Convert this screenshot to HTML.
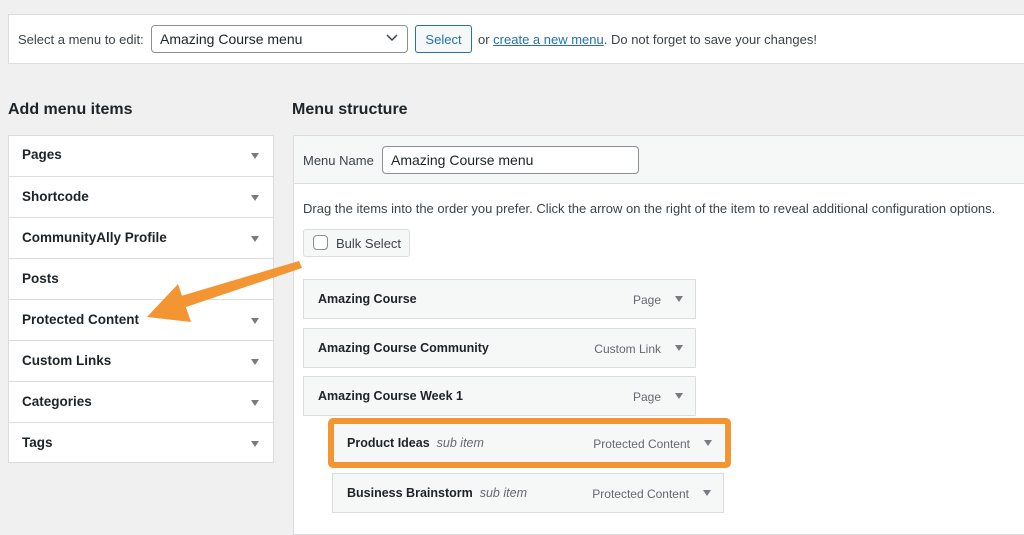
<!DOCTYPE html><html><head><style>
body{margin:0;width:1024px;height:518px;background:#f0f0f1;font-family:"Liberation Sans",sans-serif;color:#1d2327;position:relative;overflow:hidden}
.a{position:absolute;box-sizing:border-box}
.tri{width:0;height:0;border-left:4px solid transparent;border-right:4px solid transparent;border-top:6px solid #787c82;position:absolute}
.row{position:absolute;left:9px;width:264px;height:41px;border-top:1px solid #dcdcde;font-size:13.5px;font-weight:bold;padding:12px 0 0 13px;box-sizing:border-box}
.row .tri{right:14px;top:18px}
.it{position:absolute;background:#f6f7f7;border:1px solid #dcdcde;box-sizing:border-box;height:40px;font-size:12.5px;font-weight:bold;padding:12px 0 0 14px}
.it .t{position:absolute;right:34px;top:13px;font-weight:normal;color:#646970;font-size:12px}
.it .tri{right:12px;top:16px}
.it i{font-weight:normal;color:#646970;margin-left:7px}
</style></head><body>
<div class="a" style="left:8px;top:14px;width:1030px;height:50px;background:#fff;border:1px solid #dcdcde"></div>
<div class="a" style="left:18px;top:32px;font-size:13px;color:#3c434a">Select a menu to edit:</div>
<div class="a" style="left:151px;top:25px;width:257px;height:28px;border:1px solid #8c8f94;border-radius:4px;background:#fff;font-size:14px;padding:5px 8px">Amazing Course menu</div>
<svg class="a" style="left:386px;top:34px" width="12" height="8"><path d="M1 1l5 5 5-5" fill="none" stroke="#3c434a" stroke-width="1.5"/></svg>
<div class="a" style="left:415px;top:25px;width:57px;height:28px;border:1px solid #2271b1;border-radius:3px;background:#f6f7f7;color:#2271b1;font-size:13px;text-align:center;padding-top:6px">Select</div>
<div class="a" style="left:478px;top:32px;font-size:13px;color:#3c434a">or <span style="color:#2271b1;text-decoration:underline">create a new menu</span>. Do not forget to save your changes!</div>
<div class="a" style="left:8px;top:101px;font-size:16px;font-weight:bold">Add menu items</div>
<div class="a" style="left:292px;top:101px;font-size:16px;font-weight:bold">Menu structure</div>
<div class="a" style="left:8px;top:135px;width:266px;height:328px;background:#fff;border:1px solid #dcdcde"></div>
<div class="row" style="top:135px;border-top:none">Pages<div class="tri"></div></div>
<div class="row" style="top:176px">Shortcode<div class="tri"></div></div>
<div class="row" style="top:217px">CommunityAlly Profile<div class="tri"></div></div>
<div class="row" style="top:258px">Posts</div>
<div class="row" style="top:299px">Protected Content<div class="tri"></div></div>
<div class="row" style="top:340px">Custom Links<div class="tri"></div></div>
<div class="row" style="top:381px">Categories<div class="tri"></div></div>
<div class="row" style="top:422px">Tags<div class="tri"></div></div>
<div class="a" style="left:293px;top:135px;width:740px;height:400px;background:#fff;border:1px solid #dcdcde"></div>
<div class="a" style="left:294px;top:136px;width:740px;height:48px;background:#f6f7f7;border-bottom:1px solid #dcdcde"></div>
<div class="a" style="left:303px;top:153px;font-size:13px;color:#3c434a">Menu Name</div>
<div class="a" style="left:382px;top:146px;width:257px;height:28px;border:1px solid #8c8f94;border-radius:4px;background:#fff;font-size:14px;padding:5px 8px">Amazing Course menu</div>
<div class="a" style="left:303px;top:201px;font-size:13px;color:#3c434a">Drag the items into the order you prefer. Click the arrow on the right of the item to reveal additional configuration options.</div>
<div class="a" style="left:303px;top:229px;width:107px;height:28px;border:1px solid #dcdcde;border-radius:3px;background:#f6f7f7;font-size:13px;color:#3c434a;padding:6px 0 0 32px">Bulk Select</div>
<div class="a" style="left:313px;top:235px;width:15px;height:15px;border:1px solid #8c8f94;border-radius:4px;background:#fff"></div>
<div class="it" style="left:303px;top:279px;width:393px">Amazing Course<span class="t">Page</span><div class="tri"></div></div>
<div class="it" style="left:303px;top:328px;width:393px">Amazing Course Community<span class="t">Custom Link</span><div class="tri"></div></div>
<div class="it" style="left:303px;top:376px;width:393px">Amazing Course Week 1<span class="t">Page</span><div class="tri"></div></div>
<div class="a" style="left:328px;top:418px;width:403px;height:50px;border:6px solid #f39532;border-radius:5px"></div>
<div class="it" style="left:334px;top:424px;width:390px;height:38px;border:none;padding-top:12px;padding-left:13px">Product Ideas<i>sub item</i><span class="t">Protected Content</span><div class="tri"></div></div>
<div class="it" style="left:332px;top:473px;width:392px">Business Brainstorm<i>sub item</i><span class="t">Protected Content</span><div class="tri"></div></div>
<svg class="a" style="left:0;top:0" width="1024" height="518"><polygon points="299,261 302,268 186,307 181,296" fill="#f39532"/><polygon points="147,317 178,284 191,322" fill="#f39532"/></svg>
</body></html>
